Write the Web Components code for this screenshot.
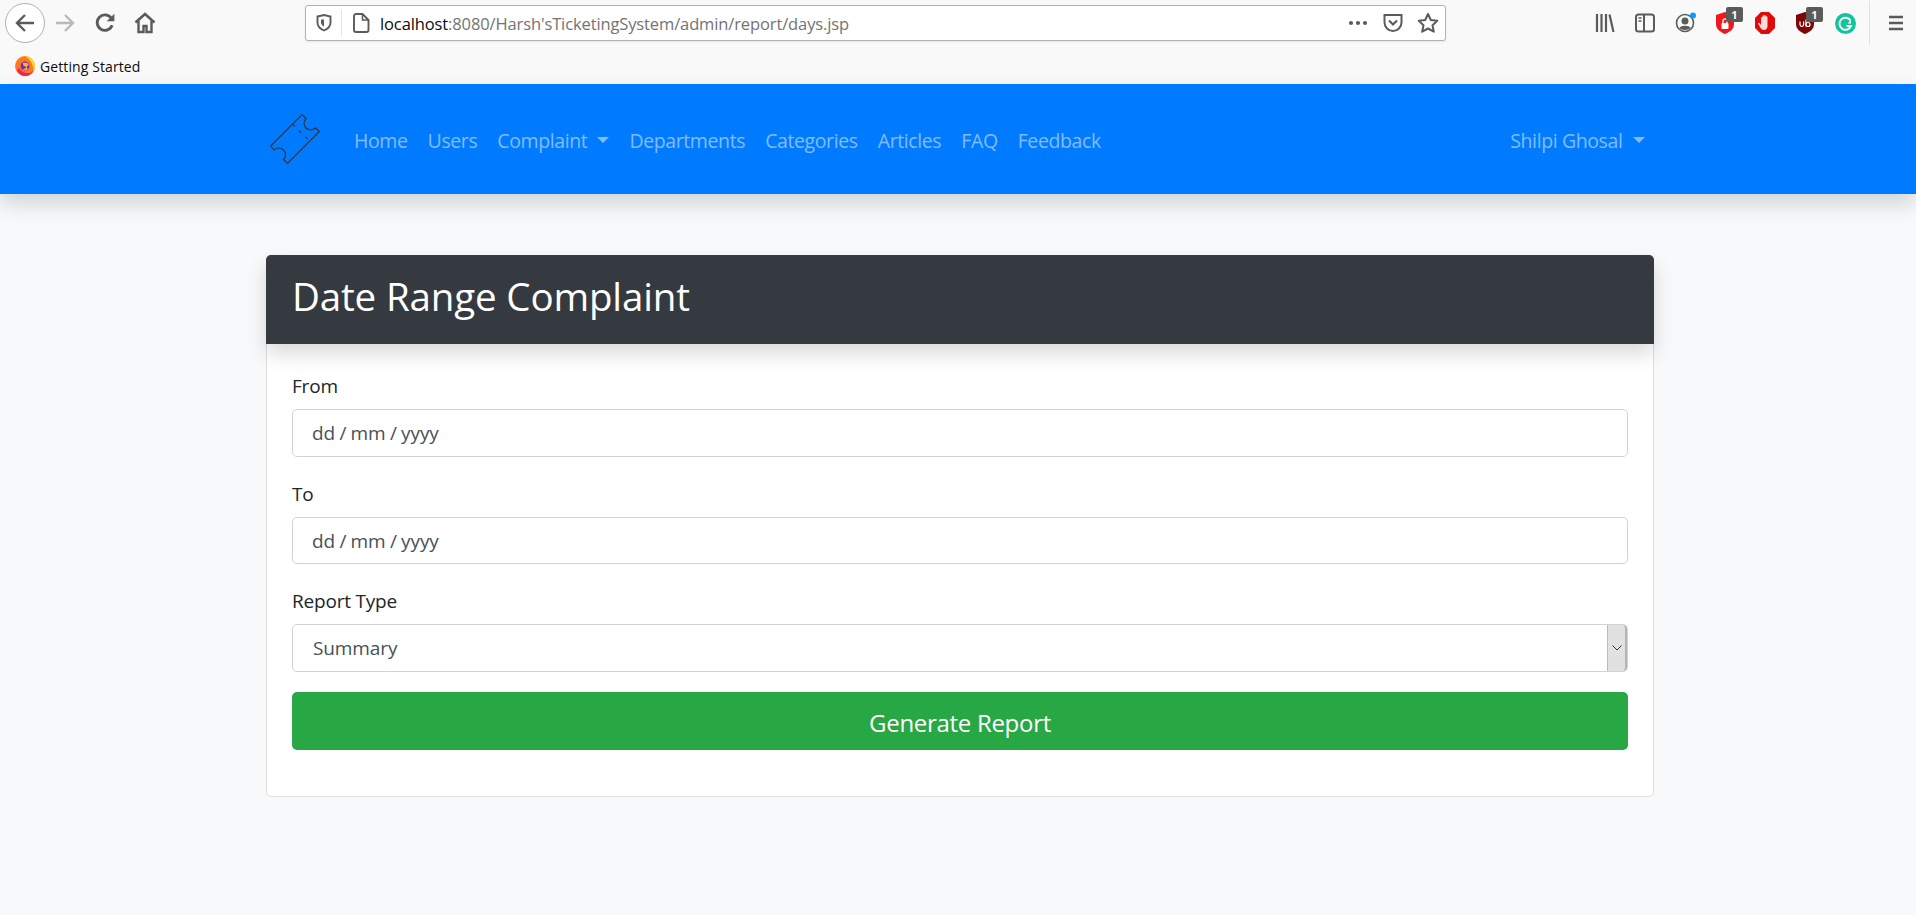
<!DOCTYPE html>
<html lang="en"><head><meta charset="utf-8"><title>Date Range Complaint</title>
<style>
html,body{margin:0;padding:0;height:100%}
body{background:#f8f9fa;font-family:"Open Sans","Noto Sans",sans-serif;height:915px;overflow:hidden}
</style></head><body>
<browser-chrome></browser-chrome>
<site-navbar></site-navbar>
<page-container>
  <report-card heading="Date Range Complaint">
    <form-field label="From" value="dd / mm / yyyy"></form-field>
    <form-field label="To" value="dd / mm / yyyy"></form-field>
    <form-field label="Report Type" value="Summary" kind="select"></form-field>
    <submit-button>Generate Report</submit-button>
  </report-card>
</page-container>
<script>
const define=(name,css,html,init)=>customElements.define(name,class extends HTMLElement{
  connectedCallback(){ if(this.shadowRoot)return;
    const r=this.attachShadow({mode:'open'});
    const f=typeof html==='function'?html(this):html;
    r.innerHTML=`<style>${css}</style>${f}`;
    if(init)init(r,this);
  }
});
const s=(w,h,vb,body,extra='')=>`<svg width="${w}" height="${h}" viewBox="${vb}" ${extra}>${body}</svg>`;
const G='#5b5b5c';
const ic={
 back:s(22,22,'0 0 22 22',`<path d="M20 11H3M11 3l-8 8 8 8" fill="none" stroke="${G}" stroke-width="2.4"/>`),
 fwd:s(22,22,'0 0 22 22',`<path d="M2 11h17M11 3l8 8-8 8" fill="none" stroke="#b9b9ba" stroke-width="2.4"/>`),
 reload:s(22,22,'0 0 20 20',`<path d="M16.5 12a7 7 0 1 1-1-6.6" fill="none" stroke="${G}" stroke-width="2.6"/><path d="M18.5 1.500v7h-7z" fill="${G}"/>`),
 home:s(22,22,'0 0 22 22',`<path d="M1.500 10.500 11 2l9.500 8.500" fill="none" stroke="${G}" stroke-width="2.6"/><path d="M4.500 9v11h5v-6h3v6h5V9" fill="none" stroke="${G}" stroke-width="2.4"/>`),
 shield:s(16,18,'0 0 16 18',`<path d="M1.500 2.500 8 1l6.500 1.500v6c0 4-3 6.500-6.500 8-3.500-1.500-6.500-4-6.500-8z" fill="none" stroke="${G}" stroke-width="1.900"/><path d="M5 5.500h3v7c-2-1-3-2.500-3-4z" fill="${G}"/>`),
 page:s(18,20,'0 0 18 20',`<path d="M2 3a2 2 0 0 1 2-2h6.500L16.500 7v10a2 2 0 0 1-2 2H4a2 2 0 0 1-2-2z" fill="none" stroke="${G}" stroke-width="1.900"/><path d="M10.500 1v6h6" fill="none" stroke="${G}" stroke-width="1.500"/>`),
 dots:s(20,6,'0 0 20 6',`<circle cx="3" cy="3" r="2.100" fill="${G}"/><circle cx="10" cy="3" r="2.100" fill="${G}"/><circle cx="17" cy="3" r="2.100" fill="${G}"/>`),
 pocket:s(20,20,'0 0 20 20',`<path d="M1.500 2h17v7.500a8.500 8.500 0 0 1-17 0z" fill="none" stroke="${G}" stroke-width="2"/><path d="m6 7.500 4 4 4-4" fill="none" stroke="${G}" stroke-width="2.200"/>`),
 star:s(22,22,'0 0 22 22',`<path d="m11 2 2.800 6 6.500.8-4.800 4.400 1.300 6.500L11 16.500 5.200 19.700l1.300-6.500L1.700 8.800l6.500-.8z" fill="none" stroke="${G}" stroke-width="2" stroke-linejoin="round"/>`),
 library:s(20,20,'0 0 20 20',`<path d="M2 1v18M6.500 1v18M11 1v18M14.500 1.500l4 17.500" fill="none" stroke="${G}" stroke-width="2.200"/>`),
 sidebar:s(20,20,'0 0 20 20',`<rect x="1" y="1.500" width="18" height="17" rx="2.500" fill="none" stroke="${G}" stroke-width="2"/><path d="M9 2v16" stroke="${G}" stroke-width="2"/><path d="M3.500 5h3M3.500 8h3" stroke="${G}" stroke-width="1.500"/>`),
 account:s(20,20,'0 0 20 20',`<circle cx="10" cy="10" r="8.500" fill="none" stroke="${G}" stroke-width="1.600"/><circle cx="10" cy="8" r="3.500" fill="${G}"/><path d="M4.500 15c1-3 10-3 11 0-2 2.500-9 2.500-11 0z" fill="${G}"/><circle cx="18" cy="2.500" r="3" fill="#0a9dff"/>`,'style="overflow:visible"'),
 lock:s(18,22,'0 0 18 22',`<path d="M0 3 9 0l9 3v9c0 5-4 8-9 10-5-2-9-5-9-10z" fill="#f01818"/><rect x="5.500" y="11" width="7" height="6" rx="1" fill="#fff"/><path d="M7 11V9a2 2 0 0 1 4 0v2" fill="none" stroke="#fff" stroke-width="1.300"/>`),
 hand:s(20,22,'0 0 20 22',`<path d="M6 0h8l6 6v10l-6 6H6l-6-6V6z" fill="#e00a0a"/><path d="M6 9V5.500a1 1 0 0 1 1.500 0V9V4a1 1 0 0 1 1.700 0v5V3.500a1 1 0 0 1 1.600 0V9V5a1 1 0 0 1 1.700 0v9c0 2-1 4-3.500 4-2 0-3-1-4-3l-2-3.500c0-1 1.200-1 1.700-.3L6 13z" fill="#fff" fill-opacity=".85"/>`),
 ub:s(18,22,'0 0 18 22',`<path d="M0 3 9 0l9 3v9c0 5-4 8-9 10-5-2-9-5-9-10z" fill="#7d0606"/><path d="M4 9.500v3a1.800 1.800 0 0 0 3.600 0v-3M10 7.500v7" fill="none" stroke="#fff" stroke-width="1.200"/><circle cx="12" cy="12.500" r="2" fill="none" stroke="#fff" stroke-width="1.200"/>`),
 gram:s(21,21,'0 0 21 21',`<circle cx="10.500" cy="10.500" r="10.500" fill="#15c39a"/><path d="M15.500 7.500a6 6 0 1 0 .5 5.500h-4.500" fill="none" stroke="#fff" stroke-width="1.900"/><path d="M16 7v3.500h-3.500z" fill="#fff"/>`),
 menu:s(18,16,'0 0 18 16',`<path d="M2 2h14M2 8h14M2 14h14" stroke="${G}" stroke-width="2.400"/>`),
 fox:s(20,20,'0 0 18 18',`<circle cx="9" cy="9" r="9" fill="#ff7a1f"/><path d="M9 0a9 9 0 0 1 9 9c0 2-.7 3.500-1.500 4.500C17 8 14 3 9 0z" fill="#ffd93a"/><path d="M2 13c1 3 4 5 7 5 3.500 0 6.500-2 8-5-2 2-5 3-8 2-3-.8-5-2.500-5.500-5z" fill="#f0264b"/><circle cx="9" cy="9" r="4" fill="#6a2fb5"/><path d="M7 6h4l1.500 2-2 1.500 1 2.500c-2 1.500-4 .5-5-.5 2 .5 3 0 3.500-1.500L7.500 8.500z" fill="#ffb02a"/>`),
 logo:s(50,50,'0 0 50 50',`<path d="M32 .7 36 4.500A6.500 6.500 0 0 0 45.500 14L49.300 17.500 17.500 49.300 13.500 45.500A6.500 6.500 0 0 0 4 36L.7 32z" fill="none" stroke="#2d3338" stroke-width="1.100" stroke-linejoin="round"/><path d="M22.500 10 39 26.500" fill="none" stroke="#2d3338" stroke-width="1.100" stroke-dasharray="3.500 5.500"/>`)
};
define('tool-icon',`:host{display:flex;align-items:center;justify-content:center;width:40px;height:46px;flex:none;position:relative}
 .badge{position:absolute;left:21px;top:7px;background:#5b5b5c;color:#fff;font:700 11px/13px "Open Sans",sans-serif;width:17px;height:15px;line-height:15px;text-align:center;border-radius:2px}`,
 h=>`<slot></slot>${h.hasAttribute('badge')?`<span class="badge">${h.getAttribute('badge')}</span>`:''}`);
define('browser-chrome',`:host{display:block;height:84px;background:#f9f9fa;color:#0c0c0d}
 .top{display:flex;height:46px;align-items:center}
 .nav{display:flex;align-items:center;padding-left:5px;width:300px;flex:none}
 .circle{width:40px;height:40px;border:1px solid #b1b1b3;border-radius:50%;box-sizing:border-box;background:#fff;display:flex;align-items:center;justify-content:center;margin:0}
 .url{width:1141px;height:36px;box-sizing:border-box;background:#fff;border:1px solid #b1b1b3;border-radius:3px;box-shadow:0 1px 2px rgba(0,0,0,.08);display:flex;align-items:center;flex:none}
 .sh{width:36px;display:flex;justify-content:center;border-right:1px solid #e4e4e6;height:26px;align-items:center;box-sizing:border-box}
 .pg{width:38px;display:flex;justify-content:center}
 .addr{font-size:16.500px;color:#737373;flex:1;white-space:nowrap;letter-spacing:-.12px}
 .addr b{font-weight:400;color:#0c0c0d}
 .act{display:flex;align-items:center}
 .act tool-icon{width:35px}
 .right{display:flex;align-items:center;margin-left:139px}
 .sep{width:1px;height:44px;background:#e1e1e3;margin:0 6px 0 4px}
 .bm{height:38px;display:flex;align-items:center;padding-left:15px;padding-top:2px;box-sizing:border-box;font-size:14px;gap:5px;letter-spacing:.1px}
 `,`<div class="top">
  <div class="nav"><div class="circle">${ic.back}</div><tool-icon>${ic.fwd}</tool-icon><tool-icon>${ic.reload}</tool-icon><tool-icon>${ic.home}</tool-icon></div>
  <div class="url"><div class="sh">${ic.shield}</div><div class="pg">${ic.page}</div><div class="addr"><b>localhost</b>:8080/Harsh'sTicketingSystem/admin/report/days.jsp</div>
  <div class="act"><tool-icon>${ic.dots}</tool-icon><tool-icon>${ic.pocket}</tool-icon><tool-icon>${ic.star}</tool-icon></div></div>
  <div class="right"><tool-icon>${ic.library}</tool-icon><tool-icon>${ic.sidebar}</tool-icon><tool-icon>${ic.account}</tool-icon><tool-icon badge="1">${ic.lock}</tool-icon><tool-icon>${ic.hand}</tool-icon><tool-icon badge="1">${ic.ub}</tool-icon><tool-icon>${ic.gram}</tool-icon><div class="sep"></div><tool-icon>${ic.menu}</tool-icon></div>
 </div>
 <div class="bm">${ic.fox}<span>Getting Started</span></div>`);
define('nav-link',`:host{display:block;padding:4px 10px 0;color:rgba(255,255,255,.5);font-size:19.500px;line-height:30px;white-space:nowrap;letter-spacing:-.39px}
 .c{display:inline-block;margin-left:10px;vertical-align:5px;border-top:6px solid;border-left:6px solid transparent;border-right:6px solid transparent}`,
 h=>`<slot></slot>${h.hasAttribute('caret')?'<span class="c"></span>':''}`);
define('site-navbar',`:host{display:block;height:110px;background:#007bff;box-shadow:0 10px 20px rgba(0,0,0,.15);position:relative}
 .w{max-width:1425px;margin:0 auto;height:100%;box-sizing:border-box;padding:0 16px 0 24.500px;display:flex;align-items:center}
 .logo{width:50px;height:50px;margin-right:24px;flex:none}
 .g{flex:1}`,`<div class="w"><div class="logo">${ic.logo}</div>
 <nav-link>Home</nav-link><nav-link>Users</nav-link><nav-link caret>Complaint</nav-link><nav-link>Departments</nav-link><nav-link>Categories</nav-link><nav-link>Articles</nav-link><nav-link>FAQ</nav-link><nav-link>Feedback</nav-link><div class="g"></div><nav-link caret>Shilpi Ghosal</nav-link></div>`);
define('page-container',`:host{display:block;width:1388px;margin:61px 0 0 266px}`,`<slot></slot>`);
define('report-card',`:host{display:block;box-sizing:border-box;background:#fff;border:1px solid rgba(0,0,0,.125);border-radius:5px;height:542px}
 .h{background:#343a40;color:#fff;height:89px;box-sizing:border-box;padding:17px 25px 0 26px;margin:-1px -1px 0;border-radius:5px 5px 0 0;box-shadow:0 10px 20px rgba(0,0,0,.15);position:relative}
 h1{margin:0;font-weight:400;font-size:38.500px;line-height:48px;letter-spacing:-.15px}
 .b{padding:25px}`,
 h=>`<div class="h"><h1>${h.getAttribute('heading')}</h1></div><div class="b"><slot></slot></div>`);
define('form-field',`:host{display:block;margin-bottom:20px}
 label{display:block;font-size:19px;line-height:26px;padding-top:4px;margin-bottom:10px;color:#212529;letter-spacing:-.2px}
 .c{height:47.500px;box-sizing:border-box;border:1px solid #ced4da;border-radius:5px;background:#fff;color:#495057;font-size:19px;line-height:46px;padding-left:19px;letter-spacing:-.1px;word-spacing:-.5px;position:relative}
 .sel{padding-left:20px;line-height:47.500px}
 .arrow{position:absolute;right:0;top:0;bottom:0;width:20px;background:#e1e1e1;border-left:1px solid #bbb;border-right:2px solid #b4b4b4;box-sizing:border-box;display:flex;align-items:center;justify-content:center;border-radius:0 4px 4px 0}`,
 h=>{const sel=h.getAttribute('kind')==='select';return `<label>${h.getAttribute('label')}</label><div class="c ${sel?'sel':''}">${h.getAttribute('value')}${sel?`<div class="arrow"><svg width="10" height="6" viewBox="0 0 10 6"><path d="M.5.500 5 5 9.500.500" fill="none" stroke="#333" stroke-width="1"/></svg></div>`:''}</div>`});
define('submit-button',`:host{display:block;height:58.500px;background:#28a745;border-radius:5px;color:#fff;font-size:24px;line-height:61px;text-align:center;letter-spacing:-.3px}`,`<slot></slot>`);
</script>
</body></html>
